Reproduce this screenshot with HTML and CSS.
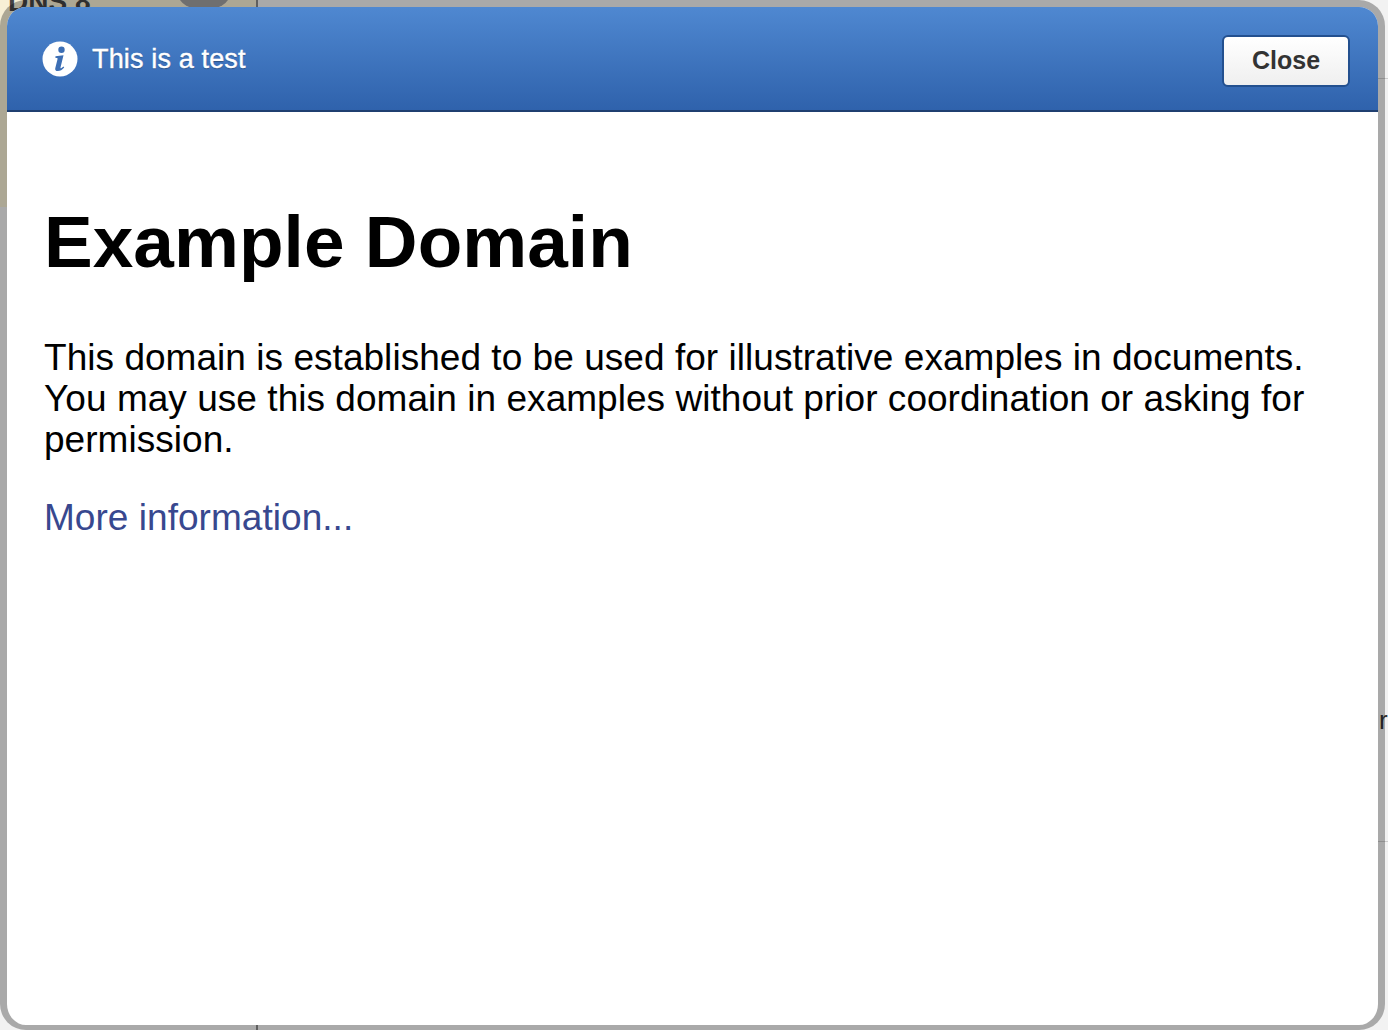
FILE: index.html
```html
<!DOCTYPE html>
<html lang="en">
<head>
    <meta charset="UTF-8">
    <title>This is a test</title>
    <link rel="stylesheet" href="styles.css">
</head>
<body>
    <!-- page behind the dialog -->
    <div class="behind">
        <div class="behindSide"></div>
        <span class="behindTitle">DNS 8</span>
        <span class="behindLogo"></span>
        <span class="behindLine"></span>
        <span class="behindRule ruleTop"></span>
        <span class="behindRule ruleBottom"></span>
        <span class="behindLetter">r</span>
    </div>

    <div class="dialog">
        <div class="dialogHeader">
            <div class="dialogTitle">
                <svg class="infoIcon" width="36" height="36" viewBox="0 0 36 36">
                    <circle cx="18" cy="18" r="17.5" fill="#fff"/>
                    <path d="M19.500 5.500a3.200 3.200 0 1 1 0 6.400 3.200 3.200 0 0 1 0-6.400zM13.500 15.200l8-.9-3 12.200c-.2.9.4 1 1 .6l2-1.500.7.9c-2 2.300-4 3.600-6.300 3.600-2.300 0-3.100-1.200-2.600-3.100l2.200-8.800c.2-.8-.1-1.100-.8-1.200l-1.400-.2z" fill="#3c6eb4"/>
                </svg>
                <span>This is a test</span>
            </div>
            <button class="closeBtn" type="button">Close</button>
        </div>
        <div class="dialogBody">
            <h1>Example Domain</h1>
            <p>This domain is established to be used for illustrative examples in documents. You may use this domain in examples without prior coordination or asking for permission.</p>
            <p class="moreInfo"><a href="#">More information...</a></p>
        </div>
    </div>
</body>
</html>
```

FILE: styles.css
```css
html, body {
    margin: 0;
    padding: 0;
    height: 100%;
    overflow: hidden;
}

body {
    font-family: "Liberation Sans", Arial, sans-serif;
    background-color: #f2f2f2;
    position: relative;
}

/* things showing around the dialog */
.behind {
    position: absolute;
    inset: 0;
    overflow: hidden;
}

.behindSide {
    position: absolute;
    left: 0;
    top: 0;
    width: 257px;
    height: 207px;
    background-color: #f7efd5;
}

.behindTitle {
    position: absolute;
    left: 8px;
    top: -14px;
    font-size: 28px;
    font-weight: bold;
    color: #444;
}

.behindLogo {
    position: absolute;
    left: 178px;
    top: -22px;
    width: 52px;
    height: 32px;
    border-radius: 50%;
    background-color: #a0a0a0;
}

.behindLine {
    position: absolute;
    left: 256px;
    top: 0;
    bottom: 0;
    width: 2px;
    background-color: #888;
}

.behindRule {
    position: absolute;
    right: 0;
    width: 10px;
    height: 1px;
    background-color: #ccc;
}

.ruleTop {
    top: 78px;
}

.ruleBottom {
    top: 841px;
}

.behindLetter {
    position: absolute;
    left: 1379px;
    top: 705px;
    font-size: 26px;
    color: #333;
}

.dialog {
    position: relative;
    box-sizing: border-box;
    width: 1385px;
    height: 1030px;
    border: solid rgba(0, 0, 0, 0.3);
    border-width: 7px 7px 5px 7px;
    border-radius: 26px;
    background-color: #fff;
    background-clip: padding-box;
    overflow: hidden;
}

.dialogHeader {
    display: flex;
    align-items: center;
    justify-content: space-between;
    box-sizing: border-box;
    height: 105px;
    padding: 0 28px 0 35px;
    background: linear-gradient(to bottom, #4f88d1, #2f62ac);
    border-bottom: 2px solid #1f3f70;
}

.dialogTitle {
    display: flex;
    align-items: center;
    gap: 14px;
    color: #fff;
    font-size: 27px;
    letter-spacing: 0.15px;
    -webkit-text-stroke: 0.4px #fff;
    text-shadow: 0 1px 1px rgba(0, 0, 0, 0.3);
}

.dialogTitle span {
    margin-top: 2px;
}

.infoIcon {
    flex-shrink: 0;
}

.closeBtn {
    width: 128px;
    height: 52px;
    margin-top: 4px;
    padding: 0;
    border: 2px solid #23508f;
    border-radius: 6px;
    background: linear-gradient(to bottom, #fff, #efefef);
    color: #333;
    font-family: inherit;
    font-size: 25px;
    font-weight: bold;
}

.dialogBody {
    padding: 0 60px 0 37px;
    color: #000;
    font-size: 37px;
    line-height: 41px;
    letter-spacing: 0.04px;
}

h1 {
    margin: 89px 0 0 0;
    font-size: 73px;
    line-height: 82px;
    font-weight: bold;
}

p {
    margin: 0;
}

.dialogBody h1 + p {
    margin-top: 54px;
}

.moreInfo {
    margin-top: 37px;
}

.moreInfo a {
    color: #38488f;
    text-decoration: none;
}
```
